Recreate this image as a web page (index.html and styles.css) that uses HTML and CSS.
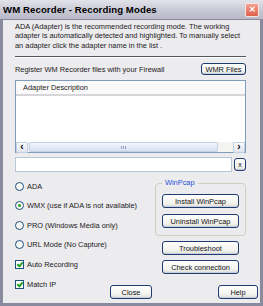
FILE: index.html
```html
<!DOCTYPE html>
<html lang="en">
<head>
    <meta charset="UTF-8">
    <title>WM Recorder - Recording Modes</title>
    <link rel="stylesheet" href="styles.css">
</head>
<body>
    <div class="window">
        <div class="titlebar">
            <span class="title">WM Recorder - Recording Modes</span>
            <span class="close-x">&#x2715;</span>
        </div>

        <div class="content">
            <p class="intro">ADA (Adapter) is the recommended recording mode. The working adapter is automatically detected and highlighted. To manually select an adapter click the adapter name in the list .</p>
            <div class="sep"></div>

            <div class="firewall">
                <span>Register WM Recorder files with your Firewall</span>
                <button class="btn btn-wmr">WMR Files</button>
            </div>

            <div class="listview">
                <div class="lv-header">Adapter Description</div>
                <div class="lv-body"></div>
                <div class="lv-scroll">
                    <span class="arrow">&lsaquo;</span>
                    <span class="thumb"><span class="grip"></span></span>
                    <span class="arrow">&rsaquo;</span>
                </div>
            </div>

            <div class="input-row">
                <div class="textbox"></div>
                <button class="btn btn-x">x</button>
            </div>

            <div class="lower">
                <div class="options">
                    <label class="opt"><span class="radio"></span>ADA</label>
                    <label class="opt"><span class="radio on"></span>WMX (use if ADA is not available)</label>
                    <label class="opt"><span class="radio"></span>PRO (Windows Media only)</label>
                    <label class="opt"><span class="radio"></span>URL Mode (No Capture)</label>
                    <label class="opt"><span class="check"></span>Auto Recording</label>
                </div>
                <div class="side">
                    <div class="group">
                        <span class="group-label">WinPcap</span>
                        <button class="btn btn-wide">Install WinPcap</button>
                        <button class="btn btn-wide">Uninstall WinPcap</button>
                    </div>
                    <button class="btn btn-wide">Troubleshoot</button>
                    <button class="btn btn-wide">Check connection</button>
                </div>
            </div>

            <div class="footer">
                <label class="opt match"><span class="check"></span>Match IP</label>
                <button class="btn btn-close">Close</button>
                <button class="btn btn-help">Help</button>
            </div>
        </div>
    </div>
</body>
</html>
```

FILE: styles.css
```css
html, body {
    margin: 0;
    padding: 0;
}
body {
    width: 263px;
    height: 306px;
    overflow: hidden;
    font-family: 'Liberation Sans', Arial, sans-serif;
    font-size: 7.4px;
    color: #1a1a1a;
}
.window {
    box-sizing: border-box;
    width: 263px;
    height: 306px;
    background: #ecebee;
    border: 3px solid #8a8a9e;
    border-top: 0;
    display: flex;
    flex-direction: column;
}
.titlebar {
    height: 19px;
    margin: 0 -3px;
    padding: 0 4px 0 3px;
    background: linear-gradient(#e2e2ea, #c7c7d3 60%, #b9b9c7);
    border-bottom: 1px solid #8a8a9e;
    display: flex;
    align-items: center;
    justify-content: space-between;
}
.title {
    font-weight: bold;
    font-size: 9.6px;
    color: #000;
    letter-spacing: 0.1px;
}
.close-x {
    width: 12px;
    height: 12px;
    border-radius: 2px;
    background: linear-gradient(#f4a08c, #e0604c);
    border: 1px solid #f8e4e0;
    color: #fff;
    font-size: 8px;
    font-weight: bold;
    line-height: 12px;
    text-align: center;
}
.content {
    padding: 0 14px 0 12px;
    display: flex;
    flex-direction: column;
}
.intro {
    margin: 2px 0 0;
    line-height: 9.4px;
}
.sep {
    margin-top: 6px;
    height: 1px;
    background: #55555f;
    border-bottom: 1px solid #fff;
}
.firewall {
    margin-top: 5px;
    display: flex;
    align-items: center;
    justify-content: space-between;
}
.btn {
    box-sizing: border-box;
    flex-shrink: 0;
    font-family: inherit;
    font-size: 7.4px;
    color: #111;
    padding: 0;
    background: linear-gradient(#ffffff, #f2f2ee 70%, #dcdcd4);
    border: 1px solid #1f3c70;
    border-radius: 3px;
    box-shadow: inset 0 -1px 0 #c8cedc;
}
.btn-wmr {
    width: 45px;
    height: 12px;
}
.listview {
    margin-top: 5px;
    height: 71px;
    background: #fff;
    border: 1px solid #7f9db9;
    display: flex;
    flex-direction: column;
}
.lv-header {
    height: 13px;
    line-height: 14px;
    padding-left: 7px;
    border-bottom: 2px solid #d6d5d9;
    background: #fafafa;
}
.lv-body {
    flex: 1;
}
.lv-scroll {
    height: 10px;
    display: flex;
    background: #f3f3ef;
}
.arrow {
    width: 10px;
    height: 9px;
    border: 1px solid #c2cfe5;
    border-radius: 1px;
    background: linear-gradient(#fbfbfb, #dfe4f0);
    font-size: 10px;
    font-weight: bold;
    line-height: 8px;
    text-align: center;
    color: #000;
}
.thumb {
    flex: 1;
    margin: 0 15px 0 1px;
    border: 1px solid #c2cfe5;
    border-radius: 2px;
    background: linear-gradient(#f3f6fb, #d8e0f0);
    display: flex;
    align-items: center;
    justify-content: center;
}
.grip {
    width: 5px;
    height: 3px;
    background: repeating-linear-gradient(90deg, #8ea2c8 0 1px, transparent 1px 2px);
}
.input-row {
    margin-top: 4px;
    display: flex;
    align-items: center;
    justify-content: space-between;
}
.textbox {
    box-sizing: border-box;
    width: 217px;
    height: 15px;
    background: #fff;
    border: 1px solid #b9c6d8;
}
.btn-x {
    width: 12px;
    height: 13px;
    font-size: 7px;
}
.lower {
    margin-top: 4px;
    height: 98px;
    display: flex;
    justify-content: space-between;
}
.options {
    display: flex;
    flex-direction: column;
}
.opt {
    height: 19.6px;
    display: flex;
    align-items: center;
    gap: 3px;
}
.radio {
    box-sizing: border-box;
    width: 9px;
    height: 9px;
    border: 1px solid #1c5180;
    border-radius: 50%;
    background: radial-gradient(#f4f4f0, #fff);
    display: flex;
    align-items: center;
    justify-content: center;
}
.radio.on::after {
    content: "";
    width: 3px;
    height: 3px;
    border-radius: 50%;
    background: #21a121;
}
.check {
    box-sizing: border-box;
    width: 9px;
    height: 9px;
    border: 1px solid #1c5180;
    background: #fff;
    position: relative;
}
.check::after {
    content: "";
    position: absolute;
    left: 2px;
    top: 0;
    width: 2px;
    height: 4px;
    border: solid #21a121;
    border-width: 0 2px 2px 0;
    transform: rotate(40deg);
}
.side {
    width: 91px;
    display: flex;
    flex-direction: column;
    align-items: center;
}
.group {
    box-sizing: border-box;
    position: relative;
    width: 91px;
    height: 55px;
    margin-top: 7px;
    padding-top: 10px;
    border: 1px solid #d0d0bf;
    border-radius: 4px;
    display: flex;
    flex-direction: column;
    align-items: center;
    gap: 6px;
}
.group-label {
    position: absolute;
    left: 6px;
    top: -6px;
    padding: 0 3px;
    background: #ecebee;
    color: #2450d8;
}
.btn-wide {
    width: 77px;
    height: 14px;
}
.side > .btn-wide {
    margin-top: 5px;
}
.side > .btn-wide + .btn-wide {
    margin-top: 5px;
}
.footer {
    display: flex;
    align-items: flex-start;
}
.match {
    flex-shrink: 0;
    width: 95px;
}
.btn-close {
    margin-top: 11px;
    width: 42px;
    height: 14px;
}
.btn-help {
    margin-top: 11px;
    margin-left: 66px;
    width: 40px;
    height: 14px;
}
```
